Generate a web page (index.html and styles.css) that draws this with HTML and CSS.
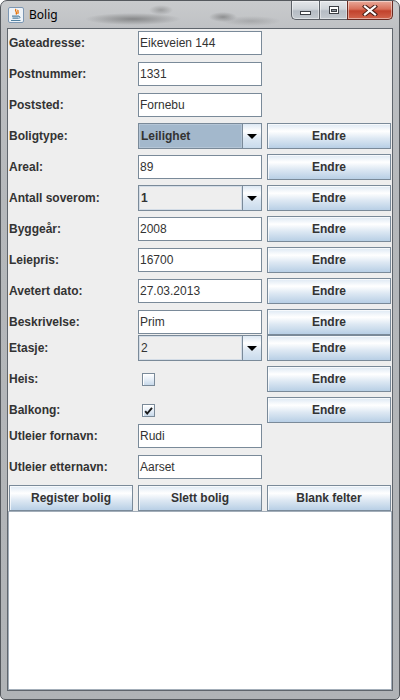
FILE: index.html
```html
<!DOCTYPE html>
<html lang="no">
<head>
<meta charset="utf-8">
<title>Bolig</title>
<link rel="stylesheet" href="styles.css">
</head>
<body>
<div class="window">
  <div class="titlebar">
    <svg class="app-icon" viewBox="0 0 16 16" width="16" height="16">
      <rect x="0.5" y="0.5" width="15" height="15" rx="1.5" fill="#eef3f8" stroke="#7d97b3"/>
      <path d="M8 2 C6 4 10 5 8 7.5 M10.2 3 C9 4.5 11.2 5.2 9.6 6.8" stroke="#e76f00" stroke-width="1.3" fill="none"/>
      <path d="M4 9.2 H11 M4.5 11.2 H10.5 M3 13.5 H12.5" stroke="#5382a1" stroke-width="1.2" fill="none"/>
      <path d="M11 9.3 Q13.4 9.8 11 11.6" stroke="#5382a1" stroke-width="1" fill="none"/>
    </svg>
    <span class="title">Bolig</span>
    <div class="caption">
      <div class="cbtn cmin"><span class="min-glyph"></span></div>
      <div class="cbtn cmax"><span class="max-glyph"></span></div>
      <div class="cbtn cclose">
        <svg width="16" height="11" viewBox="0 0 16 11">
          <path d="M3 1.5 L13 9.5 M13 1.5 L3 9.5" stroke="#4a2019" stroke-width="4.2" stroke-linecap="square" fill="none"/>
          <path d="M3 1.5 L13 9.5 M13 1.5 L3 9.5" stroke="#ffffff" stroke-width="2.2" stroke-linecap="square" fill="none"/>
        </svg>
      </div>
    </div>
  </div>
  <div class="client">
    <div class="form">
      <div class="row">
        <span class="label">Gateadresse:</span>
        <div class="field">Eikeveien 144</div>
      </div>
      <div class="row">
        <span class="label">Postnummer:</span>
        <div class="field">1331</div>
      </div>
      <div class="row">
        <span class="label">Poststed:</span>
        <div class="field">Fornebu</div>
      </div>
      <div class="row">
        <span class="label">Boligtype:</span>
        <div class="combo"><span class="combo-value selected">Leilighet</span><span class="combo-arrow"></span></div>
        <div class="btn">Endre</div>
      </div>
      <div class="row">
        <span class="label">Areal:</span>
        <div class="field">89</div>
        <div class="btn">Endre</div>
      </div>
      <div class="row">
        <span class="label">Antall soverom:</span>
        <div class="combo"><span class="combo-value">1</span><span class="combo-arrow"></span></div>
        <div class="btn">Endre</div>
      </div>
      <div class="row">
        <span class="label">Byggeår:</span>
        <div class="field">2008</div>
        <div class="btn">Endre</div>
      </div>
      <div class="row">
        <span class="label">Leiepris:</span>
        <div class="field">16700</div>
        <div class="btn">Endre</div>
      </div>
      <div class="row">
        <span class="label">Avetert dato:</span>
        <div class="field">27.03.2013</div>
        <div class="btn">Endre</div>
      </div>
      <div class="row">
        <span class="label">Beskrivelse:</span>
        <div class="field">Prim</div>
        <div class="btn">Endre</div>
      </div>
      <div class="row tight">
        <span class="label">Etasje:</span>
        <div class="combo"><span class="combo-value plain">2</span><span class="combo-arrow"></span></div>
        <div class="btn">Endre</div>
      </div>
      <div class="row">
        <span class="label">Heis:</span>
        <div class="checkcell"><span class="check"></span></div>
        <div class="btn">Endre</div>
      </div>
      <div class="row">
        <span class="label">Balkong:</span>
        <div class="checkcell">
          <span class="check">
            <svg width="11" height="11" viewBox="0 0 11 11"><path d="M2.2 6.2 L4.2 8.6 L9 2.8" stroke="#1a1a1a" stroke-width="1.9" fill="none"/></svg>
          </span>
        </div>
        <div class="btn">Endre</div>
      </div>
      <div class="row tight">
        <span class="label">Utleier fornavn:</span>
        <div class="field">Rudi</div>
      </div>
      <div class="row">
        <span class="label">Utleier etternavn:</span>
        <div class="field">Aarset</div>
      </div>
      <div class="row">
        <div class="btn">Register bolig</div>
        <div class="btn">Slett bolig</div>
        <div class="btn">Blank felter</div>
      </div>
    </div>
    <div class="textarea"></div>
  </div>
</div>
</body>
</html>
```

FILE: styles.css
```css
* { box-sizing: border-box; }
html, body { margin: 0; padding: 0; background: #ffffff; }
body {
  width: 400px;
  height: 700px;
  font-family: "Liberation Sans", Arial, sans-serif;
}

.window {
  width: 400px;
  height: 700px;
  border: 1px solid #55595e;
  border-radius: 7px 7px 5px 5px;
  padding: 0 6px 8px 6px;
  display: flex;
  flex-direction: column;
  overflow: hidden;
  background:
    radial-gradient(ellipse 48px 6px at 132px 18px, rgba(60,60,60,0.45), rgba(60,60,60,0)),
    radial-gradient(ellipse 14px 5px at 222px 16px, rgba(60,60,60,0.4), rgba(60,60,60,0)),
    radial-gradient(ellipse 12px 5px at 160px 9px, rgba(60,60,60,0.3), rgba(60,60,60,0)),
    radial-gradient(ellipse 30px 5px at 250px 20px, rgba(60,60,60,0.2), rgba(60,60,60,0)),
    linear-gradient(#c9cbcd 0px, #bec0c3 30px, #b5b8bb 200px, #b0b3b6 700px);
}

.titlebar {
  height: 27px;
  flex: none;
  display: flex;
  align-items: center;
}
.app-icon { width: 16px; height: 16px; margin-left: 1px; flex: none; }
.title {
  margin-left: 5px;
  font-family: "Noto Sans", "Open Sans", sans-serif;
  font-size: 12px;
  color: #000;
}

.caption {
  margin-left: auto;
  align-self: flex-start;
  display: flex;
  height: 19px;
}
.cbtn {
  height: 19px;
  border: 1px solid #5b6067;
  border-top: none;
  display: flex;
  align-items: center;
  justify-content: center;
  box-shadow: inset 0 0 0 1px rgba(255,255,255,0.45);
}
.cmin, .cmax {
  width: 28px;
  background: linear-gradient(#e4e7ea 0%, #d0d5da 45%, #b5bcc4 55%, #c3c9cf 100%);
}
.cmin { border-radius: 0 0 0 5px; border-right: none; }
.cmax { border-right: none; }
.cclose {
  width: 46px;
  border-color: #6a2b22;
  border-radius: 0 0 5px 0;
  background: linear-gradient(#e9aa9a 0%, #d8705a 45%, #c2422c 55%, #d2654d 100%);
}
.min-glyph {
  width: 11px;
  height: 4px;
  margin-top: 6px;
  background: #fff;
  border: 1px solid #3c4046;
}
.max-glyph {
  width: 10px;
  height: 8px;
  border: 1px solid #3c4046;
  background: #fff;
  box-shadow: inset 0 0 0 1px #fff;
  position: relative;
}
.max-glyph::after {
  content: "";
  position: absolute;
  left: 1px; top: 2px; right: 1px; bottom: 1px;
  background: #8d959e;
  border: 1px solid #3c4046;
}

.client {
  flex: 1;
  border: 1px solid #5f656c;
  background: #eeeeee;
  display: flex;
  flex-direction: column;
}

.form {
  padding: 1px 1px 0 1px;
  display: flex;
  flex-direction: column;
  flex: none;
}
.row {
  display: grid;
  grid-template-columns: 124px 124px 124px;
  column-gap: 5px;
  height: 26px;
  margin-top: 5px;
  align-items: center;
}
.row:first-child, .row.tight { margin-top: 0; }

.label {
  font-size: 12px;
  font-weight: bold;
  color: #333333;
  white-space: nowrap;
}

.field {
  height: 24px;
  border: 1px solid #7a8a99;
  background: #ffffff;
  font-size: 12px;
  color: #333333;
  padding-left: 1px;
  display: flex;
  align-items: center;
  white-space: nowrap;
}

.btn {
  height: 26px;
  border: 1px solid #7a8a99;
  background: linear-gradient(#dde8f3 0%, #ffffff 30%, #dde8f3 60%, #b8cfe5 100%);
  box-shadow: inset 1px 1px 0 rgba(255,255,255,0.7);
  font-size: 12px;
  font-weight: bold;
  color: #333333;
  display: flex;
  align-items: center;
  justify-content: center;
  white-space: nowrap;
}

.combo {
  height: 26px;
  border: 1px solid #7a8a99;
  display: flex;
}
.combo-value {
  flex: 1;
  padding-left: 2px;
  font-size: 12px;
  font-weight: bold;
  color: #333333;
  background: #eeeeee;
  box-shadow: inset 0 0 0 1px #d3dce6;
  display: flex;
  align-items: center;
}
.combo-value.selected {
  background: #a3b8cc;
  box-shadow: inset 0 0 0 1px #b4c5d6;
}
.combo-value.plain { font-weight: normal; }
.combo-arrow {
  width: 19px;
  flex: none;
  border-left: 1px solid #7a8a99;
  background: linear-gradient(#dde8f3 0%, #ffffff 30%, #dde8f3 60%, #c9dbec 100%);
  display: flex;
  align-items: center;
  justify-content: center;
}
.combo-arrow::after {
  content: "";
  width: 0;
  height: 0;
  border-left: 5px solid transparent;
  border-right: 5px solid transparent;
  border-top: 5px solid #000000;
}

.checkcell {
  display: flex;
  align-items: center;
}
.check {
  width: 13px;
  height: 13px;
  margin-left: 4px;
  border: 1px solid #7a8a99;
  background: linear-gradient(#ffffff 0%, #e6eef7 50%, #c8d9ea 100%);
  box-shadow: inset 1px 1px 0 #ffffff;
  display: flex;
  align-items: center;
  justify-content: center;
}
.check svg { display: block; }

.textarea {
  flex: 1;
  background: #ffffff;
  border: 1px solid #a3aeb9;
}
```
